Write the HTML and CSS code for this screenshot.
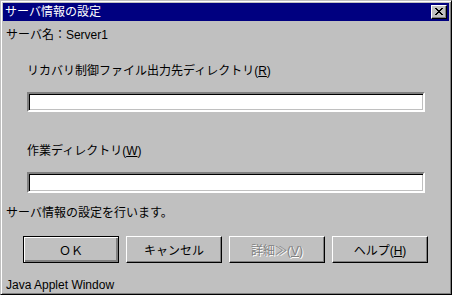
FILE: index.html
```html
<!DOCTYPE html>
<html lang="ja">
<head>
    <meta charset="UTF-8">
    <title>サーバ情報の設定</title>
    <link rel="stylesheet" href="styles.css">
</head>
<body>
<div class="window">
    <div class="titlebar">
        <span class="title">サーバ情報の設定</span>
        <span class="close">
            <svg width="8" height="7" viewBox="0 0 8 7" shape-rendering="crispEdges">
                <path d="M0 0h2v1h-2zM6 0h2v1h-2zM1 1h2v1h-2zM5 1h2v1h-2zM2 2h4v1h-4zM3 3h2v1h-2zM2 4h4v1h-4zM1 5h2v1h-2zM5 5h2v1h-2zM0 6h2v1h-2zM6 6h2v1h-2z" fill="#000"/>
            </svg>
        </span>
    </div>

    <div class="server">サーバ名：Server1</div>

    <label class="field-label">リカバリ制御ファイル出力先ディレクトリ(<u>R</u>)</label>
    <input type="text" class="field">

    <label class="field-label second">作業ディレクトリ(<u>W</u>)</label>
    <input type="text" class="field">

    <div class="status">サーバ情報の設定を行います。</div>

    <div class="buttons">
        <button class="btn default">ＯＫ</button>
        <button class="btn">キャンセル</button>
        <button class="btn disabled">詳細≫(<u>V</u>)</button>
        <button class="btn">ヘルプ(<u>H</u>)</button>
    </div>

    <div class="applet">Java Applet Window</div>
</div>
</body>
</html>
```

FILE: styles.css
```css
body { margin: 0; background-color: #c0c0c0; }
* { box-sizing: border-box; }

.window {
    width: 452px;
    height: 295px;
    background-color: #c0c0c0;
    border: 1px solid;
    border-color: #c0c0c0 #000 #000 #c0c0c0;
    box-shadow: inset 1px 1px #fff, inset -1px -1px #808080;
    padding: 2px;
    font-family: "Liberation Sans", "Noto Sans CJK JP", sans-serif;
    font-size: 12px;
    color: #000;
    display: flex;
    flex-direction: column;
}

.titlebar {
    height: 18px;
    background-color: #000080;
    color: #fff;
    display: flex;
    align-items: center;
    justify-content: space-between;
    padding: 0 2px 0 2px;
    line-height: 14px;
}
.title { padding-top: 1px; }
.close {
    width: 16px;
    height: 14px;
    background-color: #c0c0c0;
    border: 1px solid;
    border-color: #fff #000 #000 #fff;
    box-shadow: inset -1px -1px #808080;
    display: flex;
    align-items: center;
    justify-content: center;
    padding-right: 1px;
}
.close svg { display: block; }

.server { margin: 7px 0 0 3px; line-height: 14px; }

.field-label { display: block; margin: 22px 0 0 24px; line-height: 14px; }
.field-label.second { margin-top: 32px; }

.field {
    display: block;
    margin: 14px 0 0 24px;
    width: 398px;
    height: 21px;
    background-color: #fff;
    border: 2px solid;
    border-color: #808080 #fff #fff #808080;
    box-shadow: inset 1px 1px #000, inset -1px -1px #c0c0c0;
    padding: 0;
    outline: none;
}

.status { margin: 13px 0 0 3px; line-height: 14px; }

.buttons {
    display: flex;
    gap: 7px;
    margin: 16px 0 0 20px;
}
.btn {
    width: 96px;
    height: 27px;
    font-family: inherit;
    font-size: 12px;
    background-color: #c0c0c0;
    border: 1px solid;
    border-color: #fff #000 #000 #fff;
    box-shadow: inset -1px -1px #808080;
    padding: 0;
    color: #000;
}
.btn.default {
    border: 1px solid #000;
    box-shadow: inset 1px 1px #fff, inset -2px -2px #808080;
}
.btn.disabled { color: #808080; text-shadow: 1px 1px #fff; }

.applet { margin: 15px 0 0 3px; line-height: 14px; }
```
